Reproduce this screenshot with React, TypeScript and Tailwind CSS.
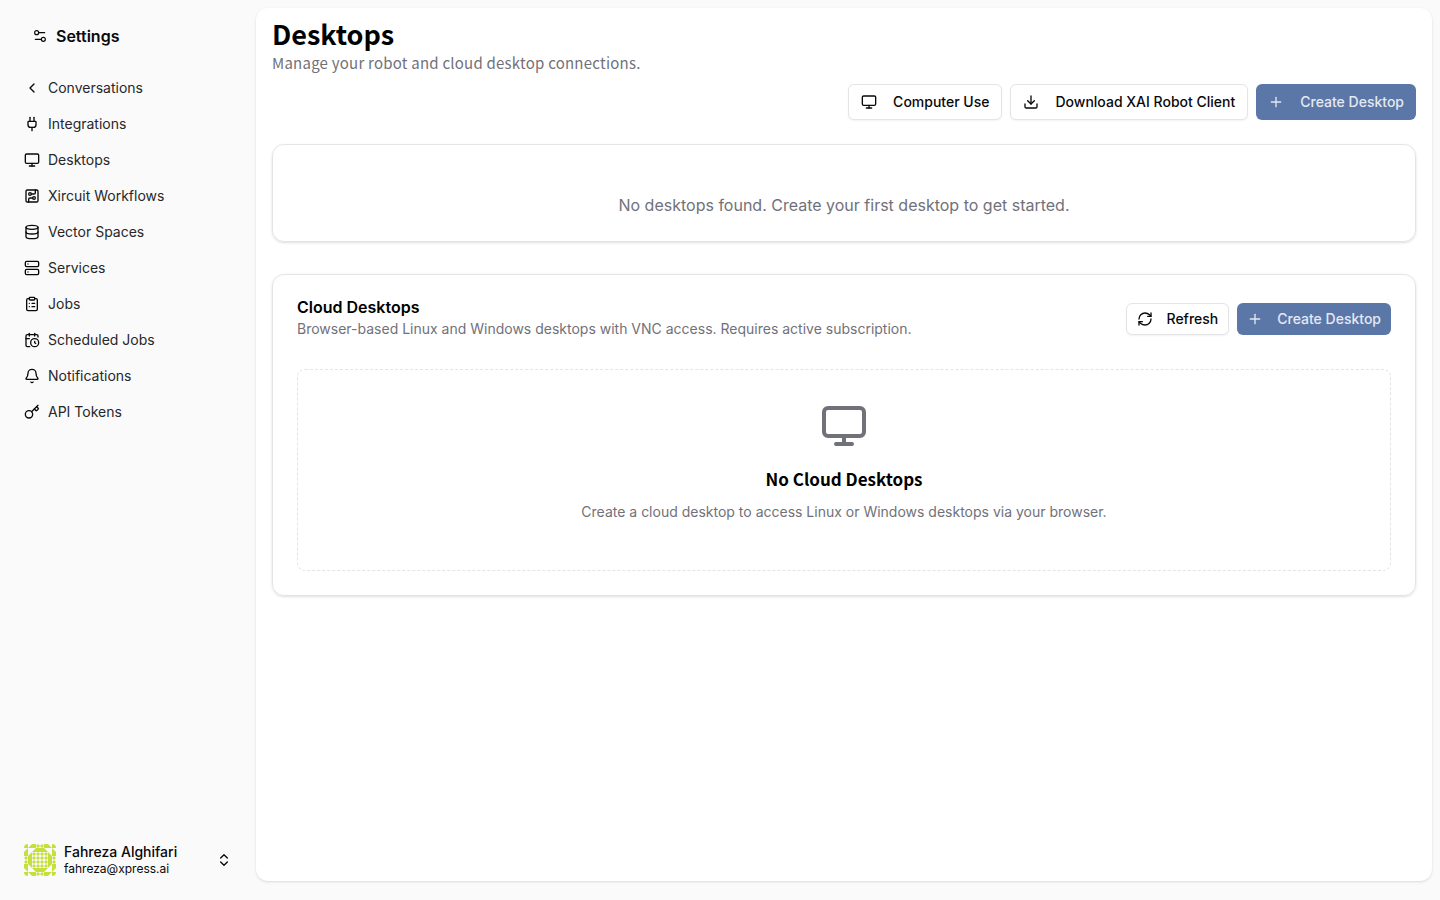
import {
  Bell,
  CalendarClock,
  ChevronLeft,
  ChevronsUpDown,
  CircuitBoard,
  ClipboardList,
  Database,
  Download,
  Key,
  Monitor,
  Plug,
  Plus,
  RefreshCw,
  Server,
  Settings2,
} from "lucide-react";

const navItems = [
  { label: "Conversations", icon: ChevronLeft },
  { label: "Integrations", icon: Plug },
  { label: "Desktops", icon: Monitor },
  { label: "Xircuit Workflows", icon: CircuitBoard },
  { label: "Vector Spaces", icon: Database },
  { label: "Services", icon: Server },
  { label: "Jobs", icon: ClipboardList },
  { label: "Scheduled Jobs", icon: CalendarClock },
  { label: "Notifications", icon: Bell },
  { label: "API Tokens", icon: Key },
];

// one quadrant of the identicon, mirrored into the other three
const quadrant = [
  ["full", "tri", "full", "diamond"],
  ["tri", "", "tri", "full"],
  ["full", "tri", "diamond", "diamond"],
  ["diamond", "full", "diamond", "diamond"],
];

function Cell({ kind, x, y }: { kind: string; x: number; y: number }) {
  const p = (a: number, b: number) => `${x + a},${y + b}`;
  if (kind === "full") return <rect x={x} y={y} width="4" height="4" />;
  if (kind === "tri") return <polygon points={`${p(4, 0)} ${p(4, 4)} ${p(0, 4)}`} />;
  if (kind === "diamond")
    return <polygon points={`${p(2, 0)} ${p(4, 2)} ${p(2, 4)} ${p(0, 2)}`} />;
  return null;
}

function Avatar() {
  return (
    <svg width="32" height="32" viewBox="0 0 32 32" className="shrink-0 rounded-[4px]">
      <g fill="#c5e03c">
        {[0, 1, 2, 3].map((qx) => (
          <g
            key={qx}
            transform={`translate(${qx % 2 ? 32 : 0} ${qx > 1 ? 32 : 0}) scale(${qx % 2 ? -1 : 1} ${qx > 1 ? -1 : 1})`}
          >
            {quadrant.map((row, y) =>
              row.map((kind, x) => (
                <Cell key={`${x}-${y}`} kind={kind} x={x * 4} y={y * 4} />
              )),
            )}
          </g>
        ))}
      </g>
    </svg>
  );
}

function OutlineButton({
  icon: Icon,
  label,
  className,
}: {
  icon: typeof Monitor;
  label: string;
  className: string;
}) {
  return (
    <button
      className={`flex items-center rounded-md border border-[#e4e4e7] bg-white text-sm font-medium text-[#09090b] shadow-xs ${className}`}
    >
      <Icon className="h-4 w-4" />
      <span>{label}</span>
    </button>
  );
}

function CreateButton({ className }: { className: string }) {
  return (
    <button
      className={`flex items-center rounded-md bg-[#5b77a8] text-sm font-medium text-[#e4e9f2] ${className}`}
    >
      <Plus className="h-4 w-4" />
      <span>Create Desktop</span>
    </button>
  );
}

export default function App() {
  return (
    <div className="flex h-[900px] w-[1440px] overflow-hidden bg-[#fafafa] font-['Inter',sans-serif] text-[#09090b]">
      <aside className="flex w-[256px] shrink-0 flex-col">
        <div className="flex h-[70px] items-center gap-2 pt-[2px] pl-[32px]">
          <Settings2 className="h-4 w-4" strokeWidth={1.75} />
          <span className="text-base font-semibold">Settings</span>
        </div>
        <nav className="flex flex-col">
          {navItems.map((item) => (
            <div key={item.label} className="flex h-9 items-center gap-2 pl-6">
              <item.icon className="h-4 w-4" />
              <span className="text-sm text-[#27272a]">{item.label}</span>
            </div>
          ))}
        </nav>
        <div className="mt-auto flex h-[80px] items-center px-6">
          <Avatar />
          <div className="ml-2 flex-1">
            <div className="text-sm leading-[18px] font-medium">Fahreza Alghifari</div>
            <div className="text-xs leading-[16px]">fahreza@xpress.ai</div>
          </div>
          <ChevronsUpDown className="h-4 w-4" />
        </div>
      </aside>

      <main className="mt-2 mr-2 mb-[19px] flex-1 rounded-xl bg-white px-4 pt-[9px] shadow-sm">
        <h1 className="font-['Noto_Sans_CJK_JP',sans-serif] text-[27px] leading-[34px] font-bold text-black">
          Desktops
        </h1>
        <p className="font-['Noto_Sans_CJK_JP',sans-serif] text-[15px] leading-[24px] tracking-[0.23px] text-[#71717a]">
          Manage your robot and cloud desktop connections.
        </p>
        <div className="mt-[9px] flex justify-end gap-2">
          <OutlineButton icon={Monitor} label="Computer Use" className="h-9 gap-4 px-3" />
          <OutlineButton
            icon={Download}
            label="Download XAI Robot Client"
            className="h-9 gap-4 px-3"
          />
          <CreateButton className="h-9 gap-4 px-3" />
        </div>

        <section className="mt-6 flex h-[98px] items-center justify-center rounded-xl border border-[#e4e4e7] pt-6 shadow-sm">
          <p className="text-base text-[#71717a]">
            No desktops found. Create your first desktop to get started.
          </p>
        </section>

        <section className="mt-8 rounded-xl border border-[#e4e4e7] p-6 shadow-sm">
          <div className="flex items-center justify-between">
            <div>
              <h2 className="text-base leading-4 font-semibold text-black">Cloud Desktops</h2>
              <p className="mt-1 text-sm leading-5 text-[#71717a]">
                Browser-based Linux and Windows desktops with VNC access. Requires active
                subscription.
              </p>
            </div>
            <div className="flex gap-2">
              <OutlineButton
                icon={RefreshCw}
                label="Refresh"
                className="h-8 gap-[14px] px-[10px]"
              />
              <CreateButton className="h-8 gap-[14px] px-[10px]" />
            </div>
          </div>

          <div className="mt-[30px] flex h-[202px] flex-col items-center rounded-lg border border-dashed border-[#e4e4e7] pt-8">
            <Monitor className="h-12 w-12 text-[#71717a]" />
            <h3 className="mt-[15px] font-['Noto_Sans_CJK_JP',sans-serif] text-[17px] leading-7 font-semibold text-black">
              No Cloud Desktops
            </h3>
            <p className="mt-[9px] text-sm leading-5 text-[#71717a]">
              Create a cloud desktop to access Linux or Windows desktops via your browser.
            </p>
          </div>
        </section>
      </main>
    </div>
  );
}
